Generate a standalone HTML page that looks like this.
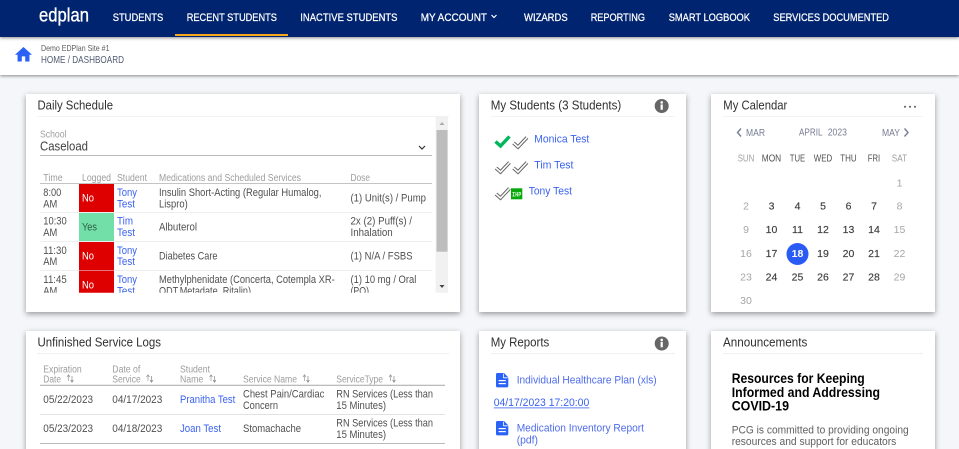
<!DOCTYPE html>
<html><head><meta charset="utf-8"><title>EDPlan Dashboard</title>
<style>
html,body{margin:0;padding:0;width:959px;height:449px;overflow:hidden;background:#f5f6f9}
svg{display:block;filter:blur(.35px)}
text{font-family:"Liberation Sans",sans-serif;white-space:pre}
.n{font-size:11px;fill:#fff;stroke:#fff;stroke-width:.25}
.tt{font-size:13px;fill:#303030}
.h{font-size:9.8px;fill:#9c9c9c}
.c{font-size:10.8px;fill:#505050}
.b{font-size:10.8px;fill:#3a62f0}
.w{font-size:10.8px;fill:#fff}
.dk{font-size:10.5px;fill:#3c3c3c;stroke:#3c3c3c;stroke-width:.15;text-anchor:middle}
.gr{font-size:10.5px;fill:#a6a6a6;text-anchor:middle}
.wk{font-size:10px;fill:#505050;text-anchor:middle}
.card{fill:#fff;filter:drop-shadow(0 2px 3px rgba(0,0,0,.38))}
.nv{font-size:10.3px;fill:#767e92}
</style></head><body>
<svg width="959" height="449" viewBox="0 0 959 449" xmlns="http://www.w3.org/2000/svg">
<defs>
<clipPath id="cl"><rect x="36" y="116" width="400" height="176.7"/></clipPath>
<g id="ck"><path d="M1 7 L5.5 11 L14.5 1.5" fill="none" stroke="#666" stroke-width="3.6"/><path d="M1 7 L5.5 11 L14.5 1.5" fill="none" stroke="#fff" stroke-width="1.6"/></g>
<g id="inf"><circle r="7" fill="#666"/><rect x="-1.1" y="-1.6" width="2.2" height="5.4" fill="#fff"/><circle cy="-3.6" r="1.3" fill="#fff"/></g>
<g id="doc"><path d="M1.5 0 H8 L12.3 4.4 V12.8 Q12.3 14.4 10.7 14.4 H1.5 Q0 14.4 0 12.8 V1.5 Q0 0 1.5 0 Z" fill="#2a62f5"/><path d="M7.6 .6 V4.8 H11.8" fill="none" stroke="#fff" stroke-width=".8"/><rect x="2.6" y="7" width="7.2" height="1.2" fill="#fff"/><rect x="2.6" y="10" width="7.2" height="1.2" fill="#fff"/></g>
<g id="sa"><path d="M1.5 7 V1.5 M0 3 L1.5 .8 L3 3" fill="none" stroke="#999" stroke-width=".7"/><path d="M5 2 V8 M3.6 6 L5 8.2 L6.4 6" fill="none" stroke="#888" stroke-width=".7"/></g>
</defs>

<!-- header band -->
<rect x="0" y="37" width="959" height="38" fill="#fff" style="filter:drop-shadow(0 1.5px 1.5px rgba(0,0,0,.45))"/>
<rect x="0" y="0" width="959" height="37" fill="#00246f" style="filter:drop-shadow(0 1px 1.5px rgba(0,0,0,.45))"/>
<rect x="175" y="34" width="113" height="2" fill="#f4a81c"/>
<text x="39" y="21.7" font-size="19.5" fill="#fff" stroke="#fff" stroke-width=".35" textLength="50" lengthAdjust="spacingAndGlyphs">edplan</text>
<text class="n" x="112.7" y="21" textLength="50.6" lengthAdjust="spacingAndGlyphs">STUDENTS</text>
<text class="n" x="186.7" y="21" textLength="90.3" lengthAdjust="spacingAndGlyphs">RECENT STUDENTS</text>
<text class="n" x="300.3" y="21" textLength="97.2" lengthAdjust="spacingAndGlyphs">INACTIVE STUDENTS</text>
<text class="n" x="420.7" y="21" textLength="66.3" lengthAdjust="spacingAndGlyphs">MY ACCOUNT</text>
<path d="M491.5 15 L494 17.5 L496.5 15" fill="none" stroke="#fff" stroke-width="1.2"/>
<text class="n" x="524" y="21" textLength="43.7" lengthAdjust="spacingAndGlyphs">WIZARDS</text>
<text class="n" x="590.7" y="21" textLength="54.3" lengthAdjust="spacingAndGlyphs">REPORTING</text>
<text class="n" x="668.7" y="21" textLength="81.3" lengthAdjust="spacingAndGlyphs">SMART LOGBOOK</text>
<text class="n" x="773.3" y="21" textLength="115.7" lengthAdjust="spacingAndGlyphs">SERVICES DOCUMENTED</text>

<path transform="translate(13.3 44.5) scale(.85)" d="M10 20v-6h4v6h5v-8h3L12 3 2 12h3v8z" fill="#2a62f5"/>
<text x="41" y="51" font-size="8.2" fill="#5c5c5c" textLength="68.5" lengthAdjust="spacingAndGlyphs">Demo EDPlan Site #1</text>
<text x="41" y="63" font-size="10.3" fill="#525c72" textLength="83" lengthAdjust="spacingAndGlyphs">HOME / DASHBOARD</text>

<!-- cards -->
<rect class="card" x="26" y="94" width="434" height="218"/>
<rect class="card" x="479" y="94" width="207" height="218"/>
<rect class="card" x="711" y="94" width="224" height="218"/>
<rect class="card" x="26" y="331" width="434" height="130"/>
<rect class="card" x="479" y="331" width="207" height="130"/>
<rect class="card" x="711" y="331" width="224" height="130"/>

<!-- Daily Schedule -->
<text class="tt" x="37.5" y="109.5" textLength="75.5" lengthAdjust="spacingAndGlyphs">Daily Schedule</text>
<rect x="37" y="116" width="412" height="1" fill="#f2f2f2"/>
<rect x="435.7" y="116" width="12.3" height="176.7" fill="#f1f1f1"/>
<rect x="436.5" y="130" width="11" height="121.7" fill="#bdbdbd"/>
<path d="M439.5 125 L442 122 L444.5 125 Z" fill="#aaa"/>
<path d="M439.5 285 L442 288 L444.5 285 Z" fill="#444"/>
<text x="40" y="137.3" font-size="9.8" fill="#a0a0a0" textLength="26.5" lengthAdjust="spacingAndGlyphs">School</text>
<text x="40" y="150.7" font-size="13" fill="#404040" textLength="48" lengthAdjust="spacingAndGlyphs">Caseload</text>
<rect x="40" y="155" width="392" height="1" fill="#bbb"/>
<path d="M419 146 L422 149 L425 146" fill="none" stroke="#333" stroke-width="1.2"/>
<text class="h" x="43.3" y="181" textLength="19.4" lengthAdjust="spacingAndGlyphs">Time</text>
<text class="h" x="82" y="181" textLength="29" lengthAdjust="spacingAndGlyphs">Logged</text>
<text class="h" x="117" y="181" textLength="30" lengthAdjust="spacingAndGlyphs">Student</text>
<text class="h" x="159" y="181" textLength="142" lengthAdjust="spacingAndGlyphs">Medications and Scheduled Services</text>
<text class="h" x="350.5" y="181" textLength="19.5" lengthAdjust="spacingAndGlyphs">Dose</text>
<rect x="40" y="183" width="392" height="1" fill="#c4c4c4"/>
<g clip-path="url(#cl)">
<rect x="40" y="212" width="392" height="1" fill="#eee"/>
<rect x="40" y="241" width="392" height="1" fill="#eee"/>
<rect x="40" y="270" width="392" height="1" fill="#eee"/>
<rect x="79" y="184" width="35" height="28" fill="#de0000"/>
<rect x="79" y="213" width="35" height="28" fill="#72dfa8"/>
<rect x="79" y="242" width="35" height="28.5" fill="#de0000"/>
<rect x="79" y="271" width="35" height="22" fill="#de0000"/>

<text class="c" x="43.3" y="196" textLength="18" lengthAdjust="spacingAndGlyphs">8:00</text>
<text class="c" x="43.3" y="207.3" textLength="14" lengthAdjust="spacingAndGlyphs">AM</text>
<text class="w" x="82" y="201.7" textLength="12" lengthAdjust="spacingAndGlyphs">No</text>
<text class="b" x="117" y="196" textLength="20" lengthAdjust="spacingAndGlyphs">Tony</text>
<text class="b" x="117" y="207.3" textLength="18" lengthAdjust="spacingAndGlyphs">Test</text>
<text class="c" x="159" y="196" textLength="162.5" lengthAdjust="spacingAndGlyphs">Insulin Short-Acting (Regular Humalog,</text>
<text class="c" x="159" y="207.3" textLength="28.7" lengthAdjust="spacingAndGlyphs">Lispro)</text>
<text class="c" x="350.5" y="201.7" textLength="75.5" lengthAdjust="spacingAndGlyphs">(1) Unit(s) / Pump</text>

<text class="c" x="43.3" y="224.7" textLength="23.4" lengthAdjust="spacingAndGlyphs">10:30</text>
<text class="c" x="43.3" y="236" textLength="14" lengthAdjust="spacingAndGlyphs">AM</text>
<text x="82" y="230.7" font-size="10.8" fill="#2f5f45" textLength="15" lengthAdjust="spacingAndGlyphs">Yes</text>
<text class="b" x="117" y="224.7" textLength="16" lengthAdjust="spacingAndGlyphs">Tim</text>
<text class="b" x="117" y="236" textLength="18" lengthAdjust="spacingAndGlyphs">Test</text>
<text class="c" x="159" y="230.7" textLength="38" lengthAdjust="spacingAndGlyphs">Albuterol</text>
<text class="c" x="350.5" y="224.7" textLength="61.5" lengthAdjust="spacingAndGlyphs">2x (2) Puff(s) /</text>
<text class="c" x="350.5" y="236" textLength="42.2" lengthAdjust="spacingAndGlyphs">Inhalation</text>

<text class="c" x="43.3" y="254" textLength="23.4" lengthAdjust="spacingAndGlyphs">11:30</text>
<text class="c" x="43.3" y="265" textLength="14" lengthAdjust="spacingAndGlyphs">AM</text>
<text class="w" x="82" y="259.7" textLength="12" lengthAdjust="spacingAndGlyphs">No</text>
<text class="b" x="117" y="254" textLength="20" lengthAdjust="spacingAndGlyphs">Tony</text>
<text class="b" x="117" y="265" textLength="18" lengthAdjust="spacingAndGlyphs">Test</text>
<text class="c" x="159" y="259.7" textLength="58.5" lengthAdjust="spacingAndGlyphs">Diabetes Care</text>
<text class="c" x="350.5" y="259.7" textLength="62" lengthAdjust="spacingAndGlyphs">(1) N/A / FSBS</text>

<text class="c" x="43.3" y="283" textLength="23.4" lengthAdjust="spacingAndGlyphs">11:45</text>
<text class="c" x="43.3" y="294.3" textLength="14" lengthAdjust="spacingAndGlyphs">AM</text>
<text class="w" x="82" y="288.7" textLength="12" lengthAdjust="spacingAndGlyphs">No</text>
<text class="b" x="117" y="283" textLength="20" lengthAdjust="spacingAndGlyphs">Tony</text>
<text class="b" x="117" y="294.3" textLength="18" lengthAdjust="spacingAndGlyphs">Test</text>
<text class="c" x="159" y="283" textLength="175.7" lengthAdjust="spacingAndGlyphs">Methylphenidate (Concerta, Cotempla XR-</text>
<text class="c" x="159" y="294.3" textLength="92" lengthAdjust="spacingAndGlyphs">ODT,Metadate, Ritalin)</text>
<text class="c" x="350.5" y="283" textLength="65.8" lengthAdjust="spacingAndGlyphs">(1) 10 mg / Oral</text>
<text class="c" x="350.5" y="294.3" textLength="18.5" lengthAdjust="spacingAndGlyphs">(PO)</text>
</g>

<!-- My Students -->
<text class="tt" x="490.7" y="109.5" textLength="130.6" lengthAdjust="spacingAndGlyphs">My Students (3 Students)</text>
<use href="#inf" x="661.7" y="106"/>
<rect x="491" y="116" width="184" height="1" fill="#f2f2f2"/>
<path d="M495.5 141.5 L500.5 146 L509.5 136.5" fill="none" stroke="#00b85c" stroke-width="3.4"/>
<use href="#ck" x="512.5" y="136"/>
<use href="#ck" x="495" y="161"/>
<use href="#ck" x="512.5" y="161"/>
<use href="#ck" x="495" y="187"/>
<rect x="511" y="188.3" width="11.3" height="11" fill="#08a808"/>
<text x="512" y="196.3" font-size="6.5" font-weight="bold" fill="#d8f5d8" textLength="9.4" lengthAdjust="spacingAndGlyphs" style="font-family:'Liberation Mono',monospace">IHP</text>
<text x="534.3" y="142.5" font-size="11.2" fill="#3a62f0" textLength="55" lengthAdjust="spacingAndGlyphs">Monica Test</text>
<text x="534.3" y="168.3" font-size="11.2" fill="#3a62f0" textLength="39.2" lengthAdjust="spacingAndGlyphs">Tim Test</text>
<text x="528.7" y="194.5" font-size="11.2" fill="#3a62f0" textLength="43.3" lengthAdjust="spacingAndGlyphs">Tony Test</text>

<!-- My Calendar -->
<text class="tt" x="723.3" y="109.5" textLength="64" lengthAdjust="spacingAndGlyphs">My Calendar</text>
<circle cx="905" cy="106.7" r="1" fill="#555"/><circle cx="910" cy="106.7" r="1" fill="#555"/><circle cx="915" cy="106.7" r="1" fill="#555"/>
<rect x="723" y="116" width="200" height="1" fill="#f2f2f2"/>
<path d="M741 128.5 L737.5 132.5 L741 136.5" fill="none" stroke="#767e92" stroke-width="1.4"/>
<text class="nv" x="746" y="136" textLength="19" lengthAdjust="spacingAndGlyphs">MAR</text>
<text class="nv" x="799" y="135.5" textLength="23.5" lengthAdjust="spacingAndGlyphs">APRIL</text>
<text class="nv" x="827.7" y="135.5" textLength="19.3" lengthAdjust="spacingAndGlyphs">2023</text>
<text class="nv" x="882" y="136" textLength="18" lengthAdjust="spacingAndGlyphs">MAY</text>
<path d="M904.5 128.5 L908 132.5 L904.5 136.5" fill="none" stroke="#767e92" stroke-width="1.4"/>
<text class="wk" x="746" y="161.5" style="fill:#a0a0a0" textLength="16.6" lengthAdjust="spacingAndGlyphs">SUN</text>
<text class="wk" x="771.5" y="161.5" textLength="19.4" lengthAdjust="spacingAndGlyphs">MON</text>
<text class="wk" x="797.5" y="161.5" textLength="15.4" lengthAdjust="spacingAndGlyphs">TUE</text>
<text class="wk" x="823" y="161.5" textLength="18.4" lengthAdjust="spacingAndGlyphs">WED</text>
<text class="wk" x="848.5" y="161.5" textLength="16.4" lengthAdjust="spacingAndGlyphs">THU</text>
<text class="wk" x="874" y="161.5" textLength="12.4" lengthAdjust="spacingAndGlyphs">FRI</text>
<text class="wk" x="899.5" y="161.5" style="fill:#a0a0a0" textLength="15.4" lengthAdjust="spacingAndGlyphs">SAT</text>

<text class="gr" x="899.5" y="186.5">1</text>
<text class="gr" x="746" y="209.5">2</text><text class="dk" x="771.5" y="209.5">3</text><text class="dk" x="797.5" y="209.5">4</text><text class="dk" x="823" y="209.5">5</text><text class="dk" x="848.5" y="209.5">6</text><text class="dk" x="874" y="209.5">7</text><text class="gr" x="899.5" y="209.5">8</text>
<text class="gr" x="746" y="233">9</text><text class="dk" x="771.5" y="233">10</text><text class="dk" x="797.5" y="233">11</text><text class="dk" x="823" y="233">12</text><text class="dk" x="848.5" y="233">13</text><text class="dk" x="874" y="233">14</text><text class="gr" x="899.5" y="233">15</text>
<circle cx="797.5" cy="254" r="11" fill="#2a5cf5"/>
<text class="gr" x="746" y="257">16</text><text class="dk" x="771.5" y="257">17</text><text x="797.5" y="257" font-size="10.5" font-weight="bold" fill="#fff" text-anchor="middle">18</text><text class="dk" x="823" y="257">19</text><text class="dk" x="848.5" y="257">20</text><text class="dk" x="874" y="257">21</text><text class="gr" x="899.5" y="257">22</text>
<text class="gr" x="746" y="280.5">23</text><text class="dk" x="771.5" y="280.5">24</text><text class="dk" x="797.5" y="280.5">25</text><text class="dk" x="823" y="280.5">26</text><text class="dk" x="848.5" y="280.5">27</text><text class="dk" x="874" y="280.5">28</text><text class="gr" x="899.5" y="280.5">29</text>
<text class="gr" x="746" y="304">30</text>

<!-- Unfinished Service Logs -->
<text class="tt" x="37.5" y="346.5" textLength="123.5" lengthAdjust="spacingAndGlyphs">Unfinished Service Logs</text>
<rect x="37" y="353" width="412" height="1" fill="#f0f0f0"/>
<text class="h" x="43.3" y="372.3" textLength="38.4" lengthAdjust="spacingAndGlyphs">Expiration</text>
<text class="h" x="43.3" y="382.3" textLength="17.7" lengthAdjust="spacingAndGlyphs">Date</text>
<use href="#sa" x="67" y="374"/>
<text class="h" x="112.3" y="372.3" textLength="28" lengthAdjust="spacingAndGlyphs">Date of</text>
<text class="h" x="112.3" y="382.3" textLength="28.4" lengthAdjust="spacingAndGlyphs">Service</text>
<use href="#sa" x="146.5" y="374"/>
<text class="h" x="180" y="372.3" textLength="30" lengthAdjust="spacingAndGlyphs">Student</text>
<text class="h" x="180" y="382.3" textLength="23.3" lengthAdjust="spacingAndGlyphs">Name</text>
<use href="#sa" x="209.5" y="374"/>
<text class="h" x="243" y="382.3" textLength="54" lengthAdjust="spacingAndGlyphs">Service Name</text>
<use href="#sa" x="303" y="374"/>
<text class="h" x="336.3" y="382.3" textLength="46.7" lengthAdjust="spacingAndGlyphs">ServiceType</text>
<use href="#sa" x="389" y="374"/>
<rect x="40" y="384.7" width="405" height="1.3" fill="#bbb"/>

<text class="c" x="43.3" y="403" textLength="49.7" lengthAdjust="spacingAndGlyphs">05/22/2023</text>
<text class="c" x="112.3" y="403" textLength="50" lengthAdjust="spacingAndGlyphs">04/17/2023</text>
<text class="b" x="180" y="403" textLength="55.3" lengthAdjust="spacingAndGlyphs">Pranitha Test</text>
<text class="c" x="243" y="397.5" textLength="81.3" lengthAdjust="spacingAndGlyphs">Chest Pain/Cardiac</text>
<text class="c" x="243" y="409" textLength="35" lengthAdjust="spacingAndGlyphs">Concern</text>
<text class="c" x="336.3" y="397.5" textLength="96.7" lengthAdjust="spacingAndGlyphs">RN Services (Less than</text>
<text class="c" x="336.3" y="409" textLength="49.7" lengthAdjust="spacingAndGlyphs">15 Minutes)</text>
<rect x="40" y="414" width="405" height="1" fill="#e2e2e2"/>
<text class="c" x="43.3" y="432" textLength="49.7" lengthAdjust="spacingAndGlyphs">05/23/2023</text>
<text class="c" x="112.3" y="432" textLength="50" lengthAdjust="spacingAndGlyphs">04/18/2023</text>
<text class="b" x="180" y="432" textLength="41" lengthAdjust="spacingAndGlyphs">Joan Test</text>
<text class="c" x="243" y="432" textLength="58" lengthAdjust="spacingAndGlyphs">Stomachache</text>
<text class="c" x="336.3" y="426.5" textLength="96.7" lengthAdjust="spacingAndGlyphs">RN Services (Less than</text>
<text class="c" x="336.3" y="438" textLength="49.7" lengthAdjust="spacingAndGlyphs">15 Minutes)</text>
<rect x="40" y="443" width="405" height="1" fill="#bbb"/>

<!-- My Reports -->
<text class="tt" x="490.7" y="346.5" textLength="58.6" lengthAdjust="spacingAndGlyphs">My Reports</text>
<use href="#inf" x="661.7" y="343.5"/>
<rect x="491" y="353" width="184" height="1" fill="#f0f0f0"/>
<use href="#doc" x="496" y="373"/>
<text x="516.7" y="383.3" font-size="10.8" fill="#4f6cea" textLength="140" lengthAdjust="spacingAndGlyphs">Individual Healthcare Plan (xls)</text>
<text x="493.7" y="406" font-size="10.8" fill="#3a62f0" textLength="95.6" lengthAdjust="spacingAndGlyphs">04/17/2023 17:20:00</text>
<rect x="493.7" y="407.5" width="95.6" height=".8" fill="#3a62f0"/>
<use href="#doc" x="496" y="421"/>
<text x="516.7" y="431.7" font-size="10.8" fill="#4f6cea" textLength="127.3" lengthAdjust="spacingAndGlyphs">Medication Inventory Report</text>
<text x="516.7" y="443.7" font-size="10.8" fill="#4f6cea" textLength="21.3" lengthAdjust="spacingAndGlyphs">(pdf)</text>

<!-- Announcements -->
<text class="tt" x="723" y="346.5" textLength="84.3" lengthAdjust="spacingAndGlyphs">Announcements</text>
<rect x="723" y="353" width="200" height="1" fill="#f0f0f0"/>
<text x="731.7" y="383" font-size="14.2" font-weight="bold" fill="#000" textLength="133" lengthAdjust="spacingAndGlyphs">Resources for Keeping</text>
<text x="731.7" y="397" font-size="14.2" font-weight="bold" fill="#000" textLength="148.3" lengthAdjust="spacingAndGlyphs">Informed and Addressing</text>
<text x="731.7" y="410.5" font-size="14.2" font-weight="bold" fill="#000" textLength="57.3" lengthAdjust="spacingAndGlyphs">COVID-19</text>
<text x="731.7" y="433.3" font-size="11" fill="#606060" textLength="177" lengthAdjust="spacingAndGlyphs">PCG is committed to providing ongoing</text>
<text x="731.7" y="445" font-size="11" fill="#606060" textLength="164.6" lengthAdjust="spacingAndGlyphs">resources and support for educators</text>
<text x="731.7" y="457" font-size="11" fill="#606060" textLength="172" lengthAdjust="spacingAndGlyphs">during the COVID-19 pandemic. Please</text>
</svg>
</body></html>
